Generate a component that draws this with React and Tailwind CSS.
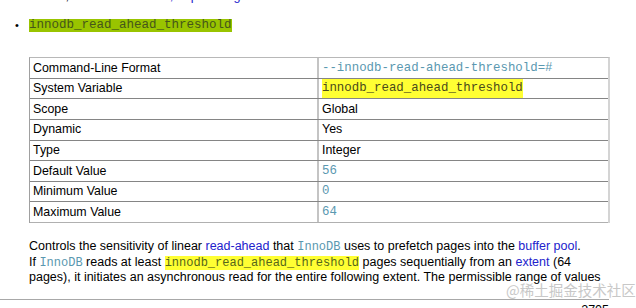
const rows = [
  ["Command-Line Format", "--innodb-read-ahead-threshold=#", "code"],
  ["System Variable", "innodb_read_ahead_threshold", "var"],
  ["Scope", "Global", "text"],
  ["Dynamic", "Yes", "text"],
  ["Type", "Integer", "text"],
  ["Default Value", "56", "code"],
  ["Minimum Value", "0", "code"],
  ["Maximum Value", "64", "code"],
];

const sans = "font-['Liberation_Sans',Arial,sans-serif]";
const mono = "font-['Liberation_Mono','Courier_New',monospace]";

function Value({ kind, children }) {
  if (kind === "code") {
    return <span className={`${mono} text-[12.4px] text-[#5a98b0]`}>{children}</span>;
  }
  if (kind === "var") {
    return (
      <span className={`${mono} text-[12.4px] text-[#4a4a1a] bg-[#ffff33]`}>{children}</span>
    );
  }
  return <span className={`${sans} text-[12.4px] text-black`}>{children}</span>;
}

export default function App() {
  return (
    <div className={`w-[636px] h-[308px] overflow-hidden bg-white relative ${sans}`}>
      {/* previous line, cut off at the top */}
      <div className="pl-[29px] -mt-[11px] h-[15px] text-[12.6px] leading-[15px] whitespace-nowrap">
        <span className="text-black">device, see </span>
        <span className="text-[#2222cc]">Section 8.5.3, “Optimizing InnoDB Disk I/O”</span>
        <span className="text-black">.</span>
      </div>

      <div className="flex items-center h-[14px] mt-[14px]">
        <span className="w-[29px] pl-[15px] text-[11px] leading-none text-black">•</span>
        <span className={`${mono} text-[12.5px] leading-[13px] bg-[#99c400] text-[#45561a]`}>
          innodb_read_ahead_threshold
        </span>
      </div>

      <div className="ml-[29px] mt-[25px] w-[581px] border-t border-[#b8b8b8] border-r-2 border-r-[#d4d4d4] border-l border-l-[#a0a0a0]">
        {rows.map(([label, value, kind], i) => (
          <div
            key={label}
            className={`flex h-[20.65px] ${i < rows.length - 1 ? "border-b border-[#858585]" : "border-b border-[#b0b0b0]"}`}
          >
            <div className="w-[289px] pl-[3px] flex items-center text-[12.4px] text-black border-r-2 border-[#c4c4c4]">
              {label}
            </div>
            <div className="flex-1 pl-[3px] flex items-center">
              <Value kind={kind}>{value}</Value>
            </div>
          </div>
        ))}
      </div>

      <div className="pl-[29px] pt-[16px] text-[12.5px] text-black w-[636px]">
        <div className="h-[15.5px] leading-[15.5px] whitespace-nowrap">
          Controls the sensitivity of linear <span className="text-[#2222cc]">read-ahead</span> that{" "}
          <span className={`${mono} text-[12px] leading-none text-[#5a98b0]`}>InnoDB</span> uses to prefetch pages into the{" "}
          <span className="text-[#2222cc]">buffer pool</span>.
        </div>
        <div className="h-[15.5px] leading-[15.5px] whitespace-nowrap">
          If <span className={`${mono} text-[12px] leading-none text-[#5a98b0]`}>InnoDB</span> reads at least{" "}
          <span className={`${mono} text-[12px] leading-none bg-[#ffff33] text-[#55661a]`}>innodb_read_ahead_threshold</span>{" "}
          pages sequentially from an <span className="text-[#2222cc]">extent</span> (64
        </div>
        <div className="h-[15.5px] leading-[15.5px] whitespace-nowrap">
          pages), it initiates an asynchronous read for the entire following extent. The permissible range of values
        </div>
      </div>

      <div className="mt-[13px] w-[609px] border-t border-[#a8a8a8]"></div>
      <div className="w-[609px] mt-[3px] flex justify-end">
        <span className="text-[12.5px] leading-[14px] text-black pr-[0px]">2705</span>
      </div>

      {/* watermark */}
      <div className="absolute left-[506px] top-[283px] text-[14.5px] leading-[14px] text-[#c8c8c8] font-['Noto_Sans_CJK_SC',sans-serif] whitespace-nowrap">
        @稀土掘金技术社区
      </div>
    </div>
  );
}
